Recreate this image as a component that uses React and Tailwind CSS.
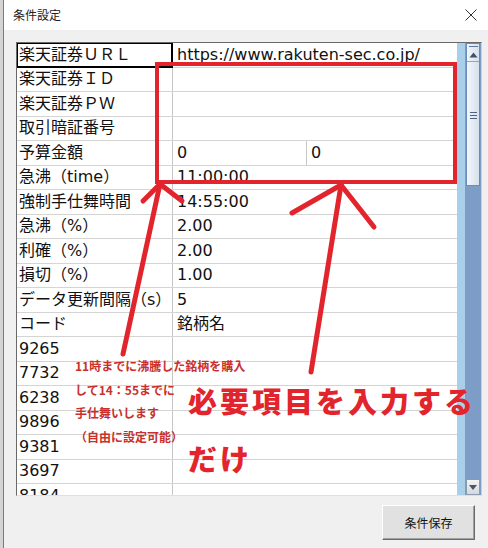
import React from "react";

const rows = [
  ["楽天証券ＵＲＬ", "https://www.rakuten-sec.co.jp/"],
  ["楽天証券ＩＤ", ""],
  ["楽天証券ＰＷ", ""],
  ["取引暗証番号", ""],
  ["予算金額", "0", "0"],
  ["急沸（time）", "11:00:00"],
  ["強制手仕舞時間", "14:55:00"],
  ["急沸（%）", "2.00"],
  ["利確（%）", "2.00"],
  ["損切（%）", "1.00"],
  ["データ更新間隔（s）", "5"],
  ["コード", "銘柄名"],
  ["9265", ""],
  ["7732", ""],
  ["6238", ""],
  ["9896", ""],
  ["9381", ""],
  ["3697", ""],
  ["8184", ""],
];

const gridFont = {
  fontFamily: '"DejaVu Sans", "Noto Sans CJK JP", sans-serif',
};

function Scrollbar() {
  return (
    <div className="w-[24px] h-full flex shrink-0 bg-[#7d9dc7]">
      <div className="w-[8px] h-full bg-[#a9cfe9]" />
      <div className="flex-1 flex flex-col justify-between pl-[1px] pr-[1px] pb-0">
        <div className="h-[143px] flex flex-col items-center border border-[#6a8cbc] bg-gradient-to-r from-[#f3f6fa] to-[#d6e0ec]">
          <div className="w-full h-[18px] flex flex-col items-center border-b border-[#8aa6cc]">
            <div className="w-[9px] h-[1px] bg-[#5a79a6] mt-[2px]" />
            <svg width="9" height="6" viewBox="0 0 9 6" className="mt-[5px]">
              <path d="M0.5 5.5 L4.5 0.5 L8.5 5.5 Z" fill="#3c4f6b" />
            </svg>
          </div>
          <div className="flex-1 flex flex-col items-center justify-center gap-[2px] pb-[16px]">
            <div className="w-[7px] h-[1px] bg-[#4b6185]" />
            <div className="w-[7px] h-[1px] bg-[#4b6185]" />
            <div className="w-[7px] h-[1px] bg-[#4b6185]" />
          </div>
        </div>
        <div className="h-[16px] flex items-center justify-center border border-[#8c9bb0] bg-gradient-to-b from-[#f4f4f4] to-[#d4d8de]">
          <svg width="8" height="5" viewBox="0 0 8 5">
            <path d="M0 0 L8 0 L4 5 Z" fill="#4a5568" />
          </svg>
        </div>
      </div>
    </div>
  );
}

export default function App() {
  return (
    <div
      className="relative w-[488px] h-[548px] flex overflow-hidden bg-[#f0f0f0]"
      style={{ fontFamily: '"Noto Sans CJK JP", sans-serif' }}
    >
      {/* background window strip */}
      <div className="w-[4px] h-full bg-[#d4d4d4] border-r border-[#7a7a7a] shrink-0" />

      <div className="flex-1 flex flex-col">
        {/* title bar */}
        <div className="h-[30px] bg-white flex items-center justify-between pl-[9px] pr-[10px] shrink-0">
          <span className="text-[12px] text-[#222] leading-none">条件設定</span>
          <svg width="12" height="12" viewBox="0 0 12 12" className="mr-[1px]">
            <path d="M0.5 0.5 L11.5 11.5 M11.5 0.5 L0.5 11.5" stroke="#333" strokeWidth="1" />
          </svg>
        </div>

        {/* body */}
        <div className="flex-1 flex flex-col pt-[12px] pl-[12px] pr-[6px]">
          <div className="flex w-[466px] h-[454px] border-l border-t border-[#696969] border-r border-b border-r-[#d0d0d0] border-b-[#e0e0e0] bg-white overflow-hidden">
            <div className="flex-1 flex flex-col overflow-hidden" style={gridFont}>
              {rows.map((r, i) => (
                <div key={i} className="flex h-[24.5px] shrink-0 border-b border-[#d4d4d4]">
                  <div className="relative w-[156px] shrink-0 flex items-center pl-[2px] border-r border-[#c6c6c6] text-[16px] leading-none text-[#111] whitespace-nowrap">
                    {r[0]}
                    {i === 0 && (
                      <div className="absolute -left-[1px] -top-[1px] -right-[1px] -bottom-[1px] border-2 border-black pointer-events-none" />
                    )}
                  </div>
                  {r.length === 3 ? (
                    <>
                      <div className="w-[134px] shrink-0 flex items-center pl-[4px] border-r border-[#c6c6c6] text-[16px] leading-none text-[#111]">
                        {r[1]}
                      </div>
                      <div className="flex-1 flex items-center pl-[4px] text-[16px] leading-none text-[#111]">
                        {r[2]}
                      </div>
                    </>
                  ) : (
                    <div className="flex-1 flex items-center pl-[4px] text-[16px] leading-none text-[#111] whitespace-nowrap">
                      {r[1]}
                    </div>
                  )}
                </div>
              ))}
            </div>
            <Scrollbar />
          </div>

          <div className="flex justify-end mt-[9px] pr-[7px]">
            <button className="w-[93px] h-[35px] flex items-center justify-center bg-[#e1e1e1] border border-t-white border-l-white border-r-[#6b6b6b] border-b-[#6b6b6b] shadow-[inset_-1px_-1px_0_#a0a0a0] text-[12px] text-[#111]">
              条件保存
            </button>
          </div>
        </div>
      </div>

      {/* annotations overlay */}
      <div className="absolute left-[155px] top-[62px] w-[302px] h-[122px] border-4 border-[#e2252c] pointer-events-none" />
      <svg className="absolute left-0 top-0 pointer-events-none" width="488" height="548" viewBox="0 0 488 548">
        <g stroke="#e2252c" strokeWidth="5" strokeLinecap="round" fill="none">
          <path d="M123 354 L160 184" />
          <path d="M160 184 L143 201" />
          <path d="M160 184 L182 201" />
          <path d="M311 372 L341 185" />
          <path d="M341 185 L292 213" />
          <path d="M341 185 L374 227" />
        </g>
      </svg>

      <div className="absolute left-[75px] top-[360px] flex flex-col text-[12px] font-bold leading-none text-[#c9302c] pointer-events-none">
        <span className="h-[24px] whitespace-nowrap">11時までに沸騰した銘柄を購入</span>
        <span className="h-[23px] whitespace-nowrap">して14：55までに</span>
        <span className="h-[24px] whitespace-nowrap">手仕舞いします</span>
        <span className="whitespace-nowrap">（自由に設定可能）</span>
      </div>

      <div className="absolute left-[188px] top-[386px] flex flex-col gap-[29px] text-[29px] font-black leading-none tracking-[3px] text-[#e2252c] pointer-events-none">
        <span className="whitespace-nowrap">必要項目を入力する</span>
        <span className="whitespace-nowrap">だけ</span>
      </div>
    </div>
  );
}
